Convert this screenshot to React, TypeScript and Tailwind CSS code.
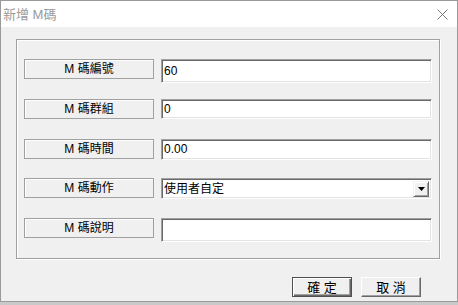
import { FC } from 'react';

const font = 'font-["Liberation_Sans","Noto_Sans_CJK_TC",sans-serif]';

const Label: FC<{ text: string }> = ({ text }) => (
  <div className="w-[130px] h-[20px] border border-[#a0a0a0] shadow-[inset_1px_1px_0_#fff] flex items-center justify-center text-[12px] text-black leading-none">
    {text}
  </div>
);

const TextBox: FC<{ value: string; h: string }> = ({ value, h }) => (
  <div
    className={`w-[271px] ${h} bg-white border border-t-[#a0a0a0] border-l-[#a0a0a0] border-r-white border-b-white shadow-[inset_1px_1px_0_#696969,inset_-1px_-1px_0_#e3e3e3] flex items-center pl-[2px] text-[12px] text-black leading-none`}
  >
    {value}
  </div>
);

const ComboBox: FC<{ value: string }> = ({ value }) => (
  <div className="w-[271px] h-[21px] bg-white border border-t-[#a0a0a0] border-l-[#a0a0a0] border-r-white border-b-white shadow-[inset_1px_1px_0_#696969,inset_-1px_-1px_0_#e3e3e3] flex items-center justify-between pl-[2px] pr-[2px] text-[12px] text-black leading-none">
    <span>{value}</span>
    <div className="w-[16px] h-[16px] bg-[#f0f0f0] border border-t-[#f0f0f0] border-l-[#f0f0f0] border-r-[#696969] border-b-[#696969] shadow-[inset_1px_1px_0_#fff,inset_-1px_-1px_0_#a0a0a0] flex items-center justify-center">
      <svg width="7" height="4" viewBox="0 0 7 4">
        <path d="M0 0 H7 L3.5 4 Z" fill="#000" />
      </svg>
    </div>
  </div>
);

const rows = [
  { label: 'M 碼編號', value: '60', h: 'h-[24px]' },
  { label: 'M 碼群組', value: '0', h: 'h-[20px]' },
  { label: 'M 碼時間', value: '0.00', h: 'h-[21px]' },
];

export default function App() {
  return (
    <div className={`w-[458px] h-[305px] bg-[#c9c9c9] ${font}`}>
      <div className="w-[458px] h-[302px] border border-[#9a9a9a] bg-[#f0f0f0] flex flex-col">
        <div className="h-[26px] bg-white flex items-center justify-between pl-[2px] pr-[9px]">
          <span className="text-[13px] text-[#9a9a9a] leading-none">新增 M碼</span>
          <svg width="11" height="11" viewBox="0 0 11 11">
            <path d="M0.5 0.5 L10.5 10.5 M10.5 0.5 L0.5 10.5" stroke="#7a7a7a" strokeWidth="1" />
          </svg>
        </div>
        <div className="flex-1 flex flex-col pt-[12px] pl-[15px]">
          <div className="w-[424px] h-[220px] border border-[#a0a0a0] shadow-[1px_1px_0_#fff,inset_1px_1px_0_#fff] flex flex-col pt-[19px] pl-[7px]">
            {rows.map((r) => (
              <div key={r.label} className="h-[41px] flex items-start gap-[7px]">
                <Label text={r.label} />
                <TextBox value={r.value} h={r.h} />
              </div>
            ))}
            <div className="h-[41px] flex items-start gap-[7px]">
              <Label text="M 碼動作" />
              <ComboBox value="使用者自定" />
            </div>
            <div className="h-[41px] flex items-start gap-[7px]">
              <Label text="M 碼說明" />
              <TextBox value="" h="h-[24px]" />
            </div>
          </div>
          <div className="mt-[18px] flex justify-end gap-[9px] pr-[36px]">
            <button className="w-[60px] h-[20px] bg-[#f0f0f0] border border-[#505050] shadow-[inset_1px_1px_0_#fff,inset_-1px_-1px_0_#696969,inset_-2px_-2px_0_#a0a0a0] flex items-center justify-center text-[13px] text-black leading-none">
              確 定
            </button>
            <button className="w-[60px] h-[20px] bg-[#f0f0f0] border border-t-white border-l-white border-r-[#696969] border-b-[#696969] shadow-[inset_-1px_-1px_0_#a0a0a0] flex items-center justify-center text-[13px] text-black leading-none">
              取 消
            </button>
          </div>
        </div>
      </div>
    </div>
  );
}
